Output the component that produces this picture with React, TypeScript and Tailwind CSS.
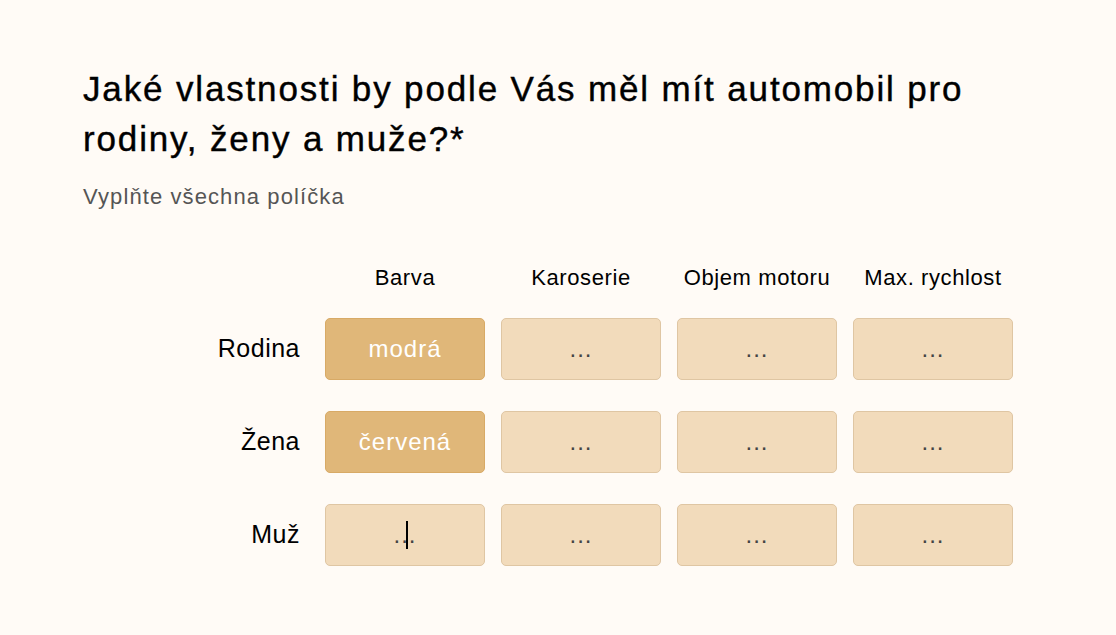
import React from "react";

const columns = ["Barva", "Karoserie", "Objem motoru", "Max. rychlost"];

const rows: { label: string; values: string[] }[] = [
  { label: "Rodina", values: ["modrá", "", "", ""] },
  { label: "Žena", values: ["červená", "", "", ""] },
  { label: "Muž", values: ["", "", "", ""] },
];

function Cell({ value, focused }: { value: string; focused?: boolean }) {
  const filled = value !== "";
  return (
    <div
      className={`relative flex h-[62px] w-[160px] items-center justify-center rounded-[5px] border text-[24px] tracking-[1px] ${
        filled
          ? "border-[#d8aa66] bg-[#e0b779] text-white"
          : "border-[#dfc6a3] bg-[#f2dbbb] text-[#444444]"
      }`}
    >
      {filled ? value : "..."}
      {focused && (
        <span className="absolute left-[80px] top-[16px] h-[28px] w-[2px] bg-black" />
      )}
    </div>
  );
}

export default function App() {
  return (
    <div
      className="min-h-[635px] w-full bg-[#fffbf6] pl-[83px] pt-[64px] text-black"
      style={{ fontFamily: '"Liberation Sans", Arial, sans-serif' }}
    >
      <h1 className="whitespace-nowrap text-[35px] font-normal leading-[50px] tracking-[1.85px] [-webkit-text-stroke:0.4px_black]">
        Jaké vlastnosti by podle Vás měl mít automobil pro
        <br />
        rodiny, ženy a muže?*
      </h1>
      <p className="mt-[19px] text-[22px] leading-[28px] tracking-[1.1px] text-[#555555]">
        Vyplňte všechna políčka
      </p>

      <div className="mt-[53px] flex flex-col">
        <div className="flex">
          <div className="w-[242px]" />
          <div className="flex gap-[16px]">
            {columns.map((c) => (
              <div
                key={c}
                className="w-[160px] text-center text-[22px] leading-[28px] tracking-[0.6px]"
              >
                {c}
              </div>
            ))}
          </div>
        </div>
        <div className="mt-[26px] flex flex-col gap-[31px]">
          {rows.map((r, ri) => (
            <div key={r.label} className="flex items-center">
              <div className="w-[217px] text-right text-[25px] tracking-[0.5px]">
                {r.label}
              </div>
              <div className="ml-[25px] flex gap-[16px]">
                {r.values.map((v, i) => (
                  <Cell key={i} value={v} focused={ri === 2 && i === 0} />
                ))}
              </div>
            </div>
          ))}
        </div>
      </div>
    </div>
  );
}
